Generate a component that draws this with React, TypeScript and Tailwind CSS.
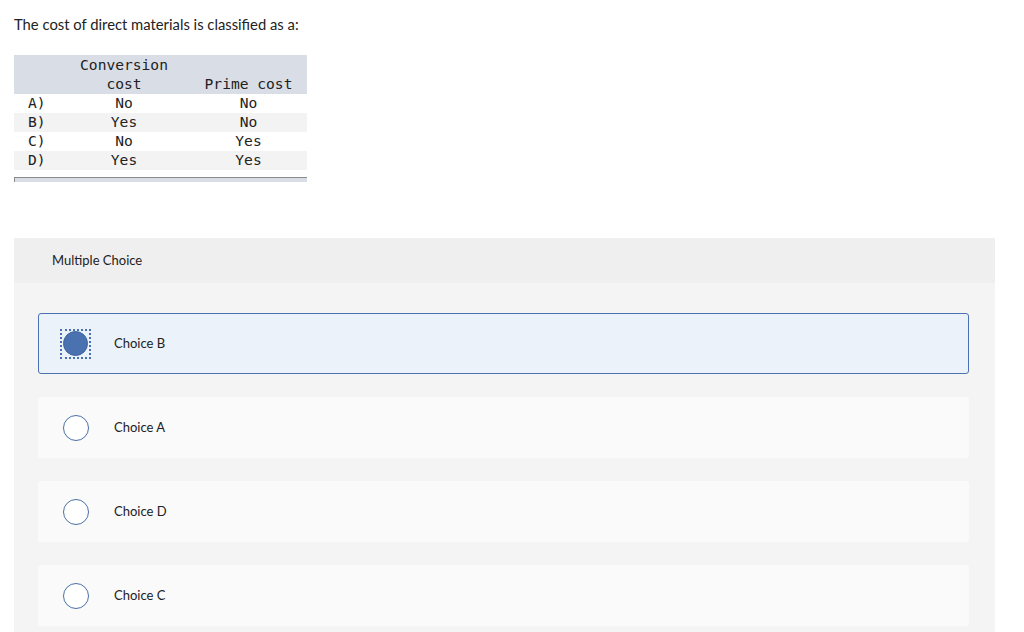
import React from "react";

const rows = [
  ["A)", "No", "No"],
  ["B)", "Yes", "No"],
  ["C)", "No", "Yes"],
  ["D)", "Yes", "Yes"],
];

const choices = [
  { label: "Choice B", selected: true },
  { label: "Choice A", selected: false },
  { label: "Choice D", selected: false },
  { label: "Choice C", selected: false },
];

export default function App() {
  return (
    <div className="bg-white w-[1024px] h-[632px] overflow-hidden" style={{ fontFamily: "Lato, 'Open Sans', sans-serif" }}>
      <div className="pl-[14px] pt-[15px] text-[14.8px] leading-[18px] text-[#222]">
        The cost of direct materials is classified as a:
      </div>

      <div
        className="ml-[14px] mt-[22px] w-[293px] text-[14.6px] leading-[19px] text-[#222]"
        style={{ fontFamily: "'DejaVu Sans Mono', monospace" }}
      >
        <div className="grid grid-cols-[42px_136px_115px] bg-[#d9dde6] h-[39px] items-end pb-[2px]">
          <div />
          <div className="text-center">
            <div>Conversion</div>
            <div>cost</div>
          </div>
          <div className="text-center pr-[2px]">Prime cost</div>
        </div>
        {rows.map((r, i) => (
          <div
            key={r[0]}
            className={`grid grid-cols-[42px_136px_115px] h-[19px] leading-[18px] ${i % 2 === 1 ? "bg-[#f3f3f3]" : "bg-white"}`}
          >
            <div className="pl-[14px]">{r[0]}</div>
            <div className="text-center">{r[1]}</div>
            <div className="text-center pr-[2px]">{r[2]}</div>
          </div>
        ))}
        <div className="mt-[7px] h-[5px] border-t border-l border-[#8a8a8a] bg-[#d9dde6]" />
      </div>

      <div className="ml-[14px] mt-[56px] w-[981px] bg-[#f4f4f4]">
        <div className="h-[45px] bg-[#efefef] flex items-center pl-[38px] text-[13px] text-[#222]">
          Multiple Choice
        </div>
        <div className="pl-[24px] pr-[26px] pt-[30px] flex flex-col gap-[23px] pb-[20px]">
          {choices.map((c) => (
            <div
              key={c.label}
              className={`h-[61px] rounded-[3px] flex items-center ${
                c.selected
                  ? "bg-[#ebf2fa] border border-[#4a72b0]"
                  : "bg-[#fafafa] border border-transparent"
              }`}
            >
              <div className="w-[75px] flex justify-center">
                {c.selected ? (
                  <div className="ml-[-2px] w-[31px] h-[30px] border-2 border-dotted border-[#4a72b0] flex items-center justify-center">
                    <div className="w-[25px] h-[25px] rounded-full bg-[#4a72b0] border border-[#3f64a0]" />
                  </div>
                ) : (
                  <div className="ml-[-1px] w-[26px] h-[26px] rounded-full bg-white border border-[#4a6fa5]" />
                )}
              </div>
              <div className="text-[13px] text-[#222]">{c.label}</div>
            </div>
          ))}
        </div>
      </div>
    </div>
  );
}
